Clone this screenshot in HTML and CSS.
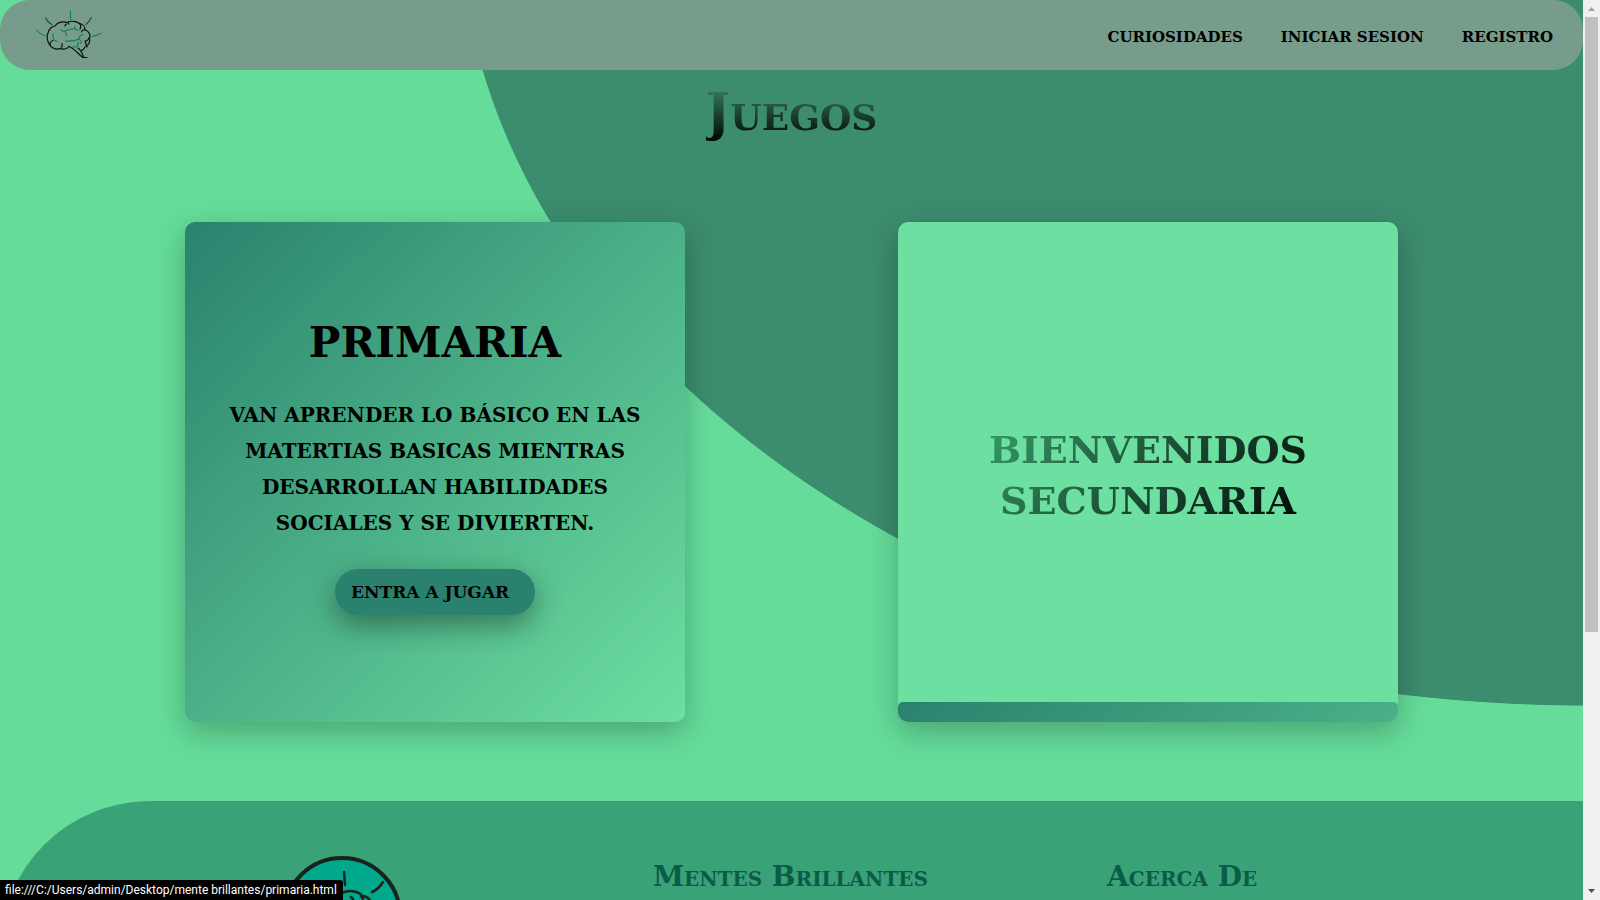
FILE: index.html
```html
<!DOCTYPE html>
<html lang="es">
<head>
<meta charset="utf-8">
<title>Mentes Brillantes</title>
<link rel="stylesheet" href="styles.css">
</head>
<body>
<div class="page">
  <header class="bar">
    <a href="#" class="brand" aria-label="Mentes Brillantes">
      <svg class="brand-icon" viewBox="0 0 66 50" fill="none" stroke-width="1.2" stroke-linecap="round" stroke-linejoin="round">
        <g stroke="#07130e">
          <path d="M33 36.500C31 39 27 40 24 38.500C20 40 15 38 14 35C11 32 10.500 26 12 23C13 19 16 16 19 16C21 12.500 26 11 31 12.500C35 10.500 41 11 43.500 13.500C47 14 49 17 49 20C53 21 55 25 53.500 28.500C54.500 32 52 36 49 37C48 39 47 40 45.500 40.500"/>
          <path d="M33 36.500C38 38 42 44 47 47.500L51 47.500M42 38C45 40 46 43 48 47.500M14 35C14 32 15 31 17 30.500M25 38.500C26 37 26.500 35 26 33.500M31 12.500C32 12.500 33 13 33 14M31 14C30 14 29 15 29 16M43.500 13.500C45 15 45 17 44 19M49 20C48 19.500 46 20 45.500 22M51 37C50 35 50 33 49 31M53 28C52 30 51 31 50 31"/>
        </g>
        <g stroke="#29483a"><path d="M9.700 8C11 11 13 13 16 14.500M55.300 7.500C54 10 53 12 50 14.500"/></g>
        <g stroke="#128050"><path d="M34.300 1L34.700 9.500M.7 20C3 23 5 24.500 8.700 25.300M64.700 23.300C62 25 60 26 56.300 26.300M25 20C27 21.500 28 21 29 21.500C30 22.500 30.500 24 30.500 25.500M29 21C32 19 35 20 38.500 18.500L39 16.500M38.500 19L42 20.500M29.500 31C35 31.500 40 30.500 43 29C43 26 45 25 47 24.500M43 29.500C45 30 45.500 32 45 33.500M37 37C41 37.500 43 35 42 32M17 24C16.500 28 18 31 21.500 31.500"/></g>
      </svg>
    </a>
    <nav class="menu">
      <a href="#">CURIOSIDADES</a>
      <a href="#">INICIAR SESION</a>
      <a href="#">REGISTRO</a>
    </nav>
  </header>
  <main class="content">
    <h1 class="title">Juegos</h1>
    <div class="cards">
      <section class="card card-open">
        <h2 class="card-title">PRIMARIA</h2>
        <p class="card-text">VAN APRENDER LO BÁSICO EN LAS MATERTIAS BASICAS MIENTRAS DESARROLLAN HABILIDADES SOCIALES Y SE DIVIERTEN.</p>
        <a href="#" class="play">ENTRA A JUGAR</a>
      </section>
      <section class="card card-closed">
        <h2 class="welcome">BIENVENIDOS SECUNDARIA</h2>
        <div class="strip"></div>
      </section>
    </div>
  </main>
  <footer class="foot">
    <svg class="foot-logo" viewBox="0 0 120 120" fill="none" stroke="#1b211d" stroke-width="2.500" stroke-linecap="round" stroke-linejoin="round">
      <circle cx="60" cy="60" r="58" fill="#00a98b" stroke-width="4"/>
      <path d="M62 16L63 29M101 26C98 31 95 34 90 36M20 26C23 31 26 34 31 36M38 46C42 38 52 35 60 37C68 33 78 36 80 40C86 40 90 45 90 51C99 55 99 65 96 69C98 77 92 83 86 84L90 98L66 83C58 88 50 88 46 84C36 87 27 81 28 74C20 66 24 50 38 46M69 41C71 43 72 44 71 47M79 40C82 43 82 46 80 50"/>
    </svg>
    <h3 class="foot-title">Mentes Brillantes</h3>
    <h3 class="foot-title">Acerca De</h3>
  </footer>
</div>
<div class="scroll" aria-hidden="true">
  <svg class="arrow" viewBox="0 0 17 17"><path d="M5 11h7L8.500 7z" fill="#a0a0a0"/></svg>
  <div class="track"><div class="thumb"></div></div>
  <svg class="arrow" viewBox="0 0 17 17"><path d="M5 6h7L8.500 10z" fill="#505050"/></svg>
</div>
<div class="status">file:///C:/Users/admin/Desktop/mente brillantes/primaria.html</div>
</body>
</html>
```
FILE: styles.css
```css
* { box-sizing: border-box; }
body {
  margin: 0;
  height: 100vh;
  display: flex;
  overflow: hidden;
  font-family: "DejaVu Serif", serif;
  font-weight: bold;
  color: #000;
}
h1, h2, h3, p { margin: 0; }
a { color: inherit; text-decoration: none; }
.page {
  flex: 1;
  min-width: 0;
  overflow: hidden;
  background: radial-gradient(ellipse 1131px 800px at calc(100% + 6px) -94px, #3c8c6e 99.9%, #65dc9a 100%);
}
.bar {
  height: 70px;
  padding: 0 30px 0 36px;
  display: flex;
  align-items: center;
  justify-content: space-between;
  background: #779c8c;
  border-radius: 30px;
}
.brand-icon { display: block; width: 66px; height: 50px; }
.menu { display: flex; gap: 38px; font-size: 15px; line-height: 24px; padding-top: 4px; }
.title {
  width: max-content;
  margin: 2px auto 0;
  font-size: 52px;
  line-height: 80px;
  font-variant: small-caps;
  background: linear-gradient(#3c8c6e 12%, #000 88%);
  background-clip: text;
  -webkit-background-clip: text;
  color: transparent;
}
.cards {
  display: grid;
  grid-template-columns: repeat(2, minmax(0, 500px));
  justify-content: center;
  gap: 213px;
  padding: 70px 40px 79px;
}
.card {
  height: 500px;
  border-radius: 10px;
  display: flex;
  flex-direction: column;
  align-items: center;
  text-align: center;
  box-shadow: 0 10px 30px rgba(0, 0, 0, .25);
}
.card-open {
  justify-content: center;
  padding: 0 40px 16px;
  background: linear-gradient(135deg, #2a826e, #6ddfa1);
}
.card-title { font-size: 42px; line-height: 60px; }
.card-text { font-size: 20px; line-height: 36px; padding: 24px 0 28px; }
.play {
  width: 200px;
  height: 46px;
  padding: 0 16px;
  border-radius: 23px;
  background: #2a826e;
  font-size: 17px;
  line-height: 46px;
  text-align: left;
  white-space: nowrap;
  box-shadow: 0 10px 30px rgba(0, 0, 0, .4);
}
.card-closed { background: #6ddfa1; }
.welcome {
  width: 340px;
  margin: auto;
  padding-top: 26px;
  font-size: 38px;
  line-height: 51px;
  background: linear-gradient(135deg, #3aa870, #000);
  background-clip: text;
  -webkit-background-clip: text;
  color: transparent;
}
.strip {
  width: 100%;
  height: 20px;
  border-radius: 5px 5px 10px 10px;
  background: linear-gradient(135deg, #2a826e, #4bb088);
}
.foot {
  display: grid;
  grid-template-columns: 454px 454px 1fr;
  align-items: start;
  min-height: 300px;
  padding: 55px 0 0 199px;
  border-top-left-radius: 150px;
  background: #3aa277;
}
.foot-logo { width: 120px; height: 120px; margin-left: 83px; }
.foot-title { font-size: 28px; line-height: 42px; font-variant: small-caps; color: #0b5c47; }
.scroll { width: 17px; display: flex; flex-direction: column; background: #f0f0f0; }
.arrow { display: block; width: 17px; height: 17px; }
.track { flex: 1; padding: 0 2px; }
.thumb { height: 71%; background: #c0c0c0; }
.status {
  position: fixed;
  left: 0;
  bottom: 0;
  height: 20px;
  padding: 0 6px 0 5px;
  border-top-right-radius: 3px;
  background: #000;
  color: #fff;
  font: 12px/20px Roboto, sans-serif;
}
```
